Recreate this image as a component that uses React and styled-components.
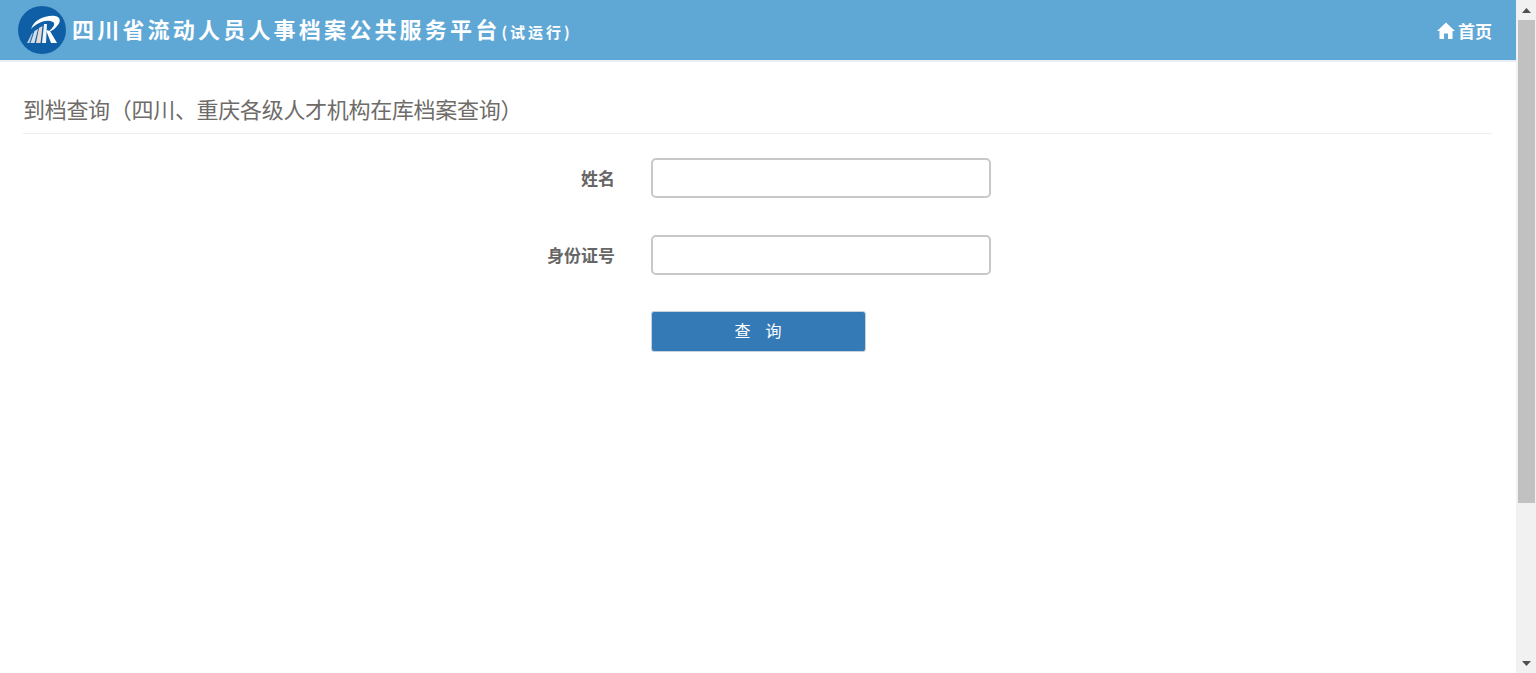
import React from 'react';
import styled, {createGlobalStyle} from 'styled-components';

const cjk = '"Noto Sans CJK SC", "Liberation Sans", sans-serif';

const GlobalStyle = createGlobalStyle`
    html, body {
        height: 100%;
        overflow: hidden;
    }
    body {
        margin: 0;
        background: #fff;
        font-family: ${cjk};
    }
`;

const Shell = styled.div`
    display: flex;
    height: 100vh;
`;

const Page = styled.div`
    flex: 1;
    min-width: 0;
`;

const Header = styled.header`
    display: flex;
    align-items: center;
    justify-content: space-between;
    height: 60px;
    padding: 0 24px 0 18px;
    background: #5fa8d6;
    border-bottom: 2px solid #e8eef3;
`;

const Brand = styled.div`
    display: flex;
    align-items: center;
    gap: 6px;
`;

const Title = styled.h1`
    margin: -1px 0 0;
    font-size: 22px;
    line-height: 30px;
    font-weight: 700;
    letter-spacing: 3.2px;
    color: #fff;
    white-space: nowrap;
`;

const TitleNote = styled.span`
    margin-left: 1px;
    font-size: 15px;
    letter-spacing: 3px;
`;

const HomeLink = styled.a`
    display: flex;
    align-items: center;
    gap: 3px;
    font-size: 17px;
    font-weight: 700;
    color: #fff;
    text-decoration: none;
`;

const Content = styled.main`
    padding: 0 24px 0 23px;
`;

const PageTitle = styled.h2`
    margin: 0;
    padding: 30px 0 9px;
    font-size: 22px;
    line-height: 32px;
    font-weight: 400;
    letter-spacing: -0.3px;
    color: #6e6b68;
    border-bottom: 1px solid #eeeeee;
`;

const Form = styled.form`
    display: flex;
    flex-direction: column;
    gap: 37px;
    padding-top: 24px;
`;

const Row = styled.div`
    display: grid;
    grid-template-columns: 592px 340px;
    column-gap: 36px;
    align-items: center;
`;

const ButtonRow = styled(Row)`
    margin-top: -1px;
`;

const Label = styled.label`
    padding-bottom: 2px;
    font-size: 17px;
    font-weight: 700;
    color: #666;
    text-align: right;
`;

const Input = styled.input`
    box-sizing: border-box;
    width: 340px;
    height: 40px;
    padding: 0 12px;
    background: #fff;
    border: 2px solid #c8c8c8;
    border-radius: 5px;
    outline: none;
`;

const Button = styled.button`
    box-sizing: border-box;
    width: 215px;
    height: 41px;
    padding: 0 0 3px;
    background: #337ab7;
    border: 1px solid #c6d3dd;
    border-radius: 3px;
    color: #fff;
    font-family: ${cjk};
    font-size: 16px;
    letter-spacing: 1px;
    white-space: pre;
`;

const Scrollbar = styled.div`
    display: flex;
    flex-direction: column;
    flex: 0 0 20px;
    height: 100%;
    background: #f1f1f1;
`;

const ScrollArrow = styled.div`
    display: flex;
    align-items: center;
    justify-content: center;
    flex: 0 0 20px;
`;

const ScrollThumb = styled.div`
    flex: 0 0 483px;
    margin: 0 1px 0 2px;
    background: #c1c1c1;
`;

const ScrollGap = styled.div`
    flex: 1;
`;

const Logo = () => (
    <svg width="48" height="48" viewBox="0 0 48 48">
        <circle cx="24" cy="24" r="24" fill="#0f5fa6"/>
        <path d="M13 23C16 14 27 9 37 10C43 11 43 16 39 20C37 23 34 25 30 26C35 22 38 18 35 16C29 13 20 16 13 23Z" fill="#fff"/>
        <path d="M28 24L33 37H39L32 25Z" fill="#fff"/>
        <path d="M26 18L29 18L28 37H24Z" fill="#eef3f8"/>
        <path d="M21 22L24.5 20L22.5 37H18Z" fill="#ead9d2"/>
        <path d="M16.5 25L20 23L16.5 37H12.5Z" fill="#d3e0ec"/>
        <path d="M13.5 28L15 26.5L11.5 37H9Z" fill="#b9cfe2"/>
    </svg>
);

const HomeIcon = () => (
    <svg width="18" height="17" viewBox="0 0 18 17">
        <path d="M9 0.5L18 9H15.5V17H11V11.5H7V17H2.5V9H0Z" fill="#fff"/>
    </svg>
);

const Arrow = ({down}) => (
    <svg width="9" height="5" viewBox="0 0 9 5">
        <path d={down ? 'M0 0H9L4.5 5Z' : 'M4.5 0L9 5H0Z'} fill="#505050"/>
    </svg>
);

const App = () => {
    return (
        <Shell>
            <GlobalStyle/>
            <Page>
                <Header>
                    <Brand>
                        <Logo/>
                        <Title>四川省流动人员人事档案公共服务平台<TitleNote>(试运行)</TitleNote></Title>
                    </Brand>
                    <HomeLink href="#"><HomeIcon/>首页</HomeLink>
                </Header>
                <Content>
                    <PageTitle>到档查询（四川、重庆各级人才机构在库档案查询）</PageTitle>
                    <Form>
                        <Row>
                            <Label>姓名</Label>
                            <Input type="text"/>
                        </Row>
                        <Row>
                            <Label>身份证号</Label>
                            <Input type="text"/>
                        </Row>
                        <ButtonRow>
                            <span/>
                            <Button type="button">查{'   '}询</Button>
                        </ButtonRow>
                    </Form>
                </Content>
            </Page>
            <Scrollbar>
                <ScrollArrow><Arrow/></ScrollArrow>
                <ScrollThumb/>
                <ScrollGap/>
                <ScrollArrow><Arrow down/></ScrollArrow>
            </Scrollbar>
        </Shell>
    );
};

export default App;
